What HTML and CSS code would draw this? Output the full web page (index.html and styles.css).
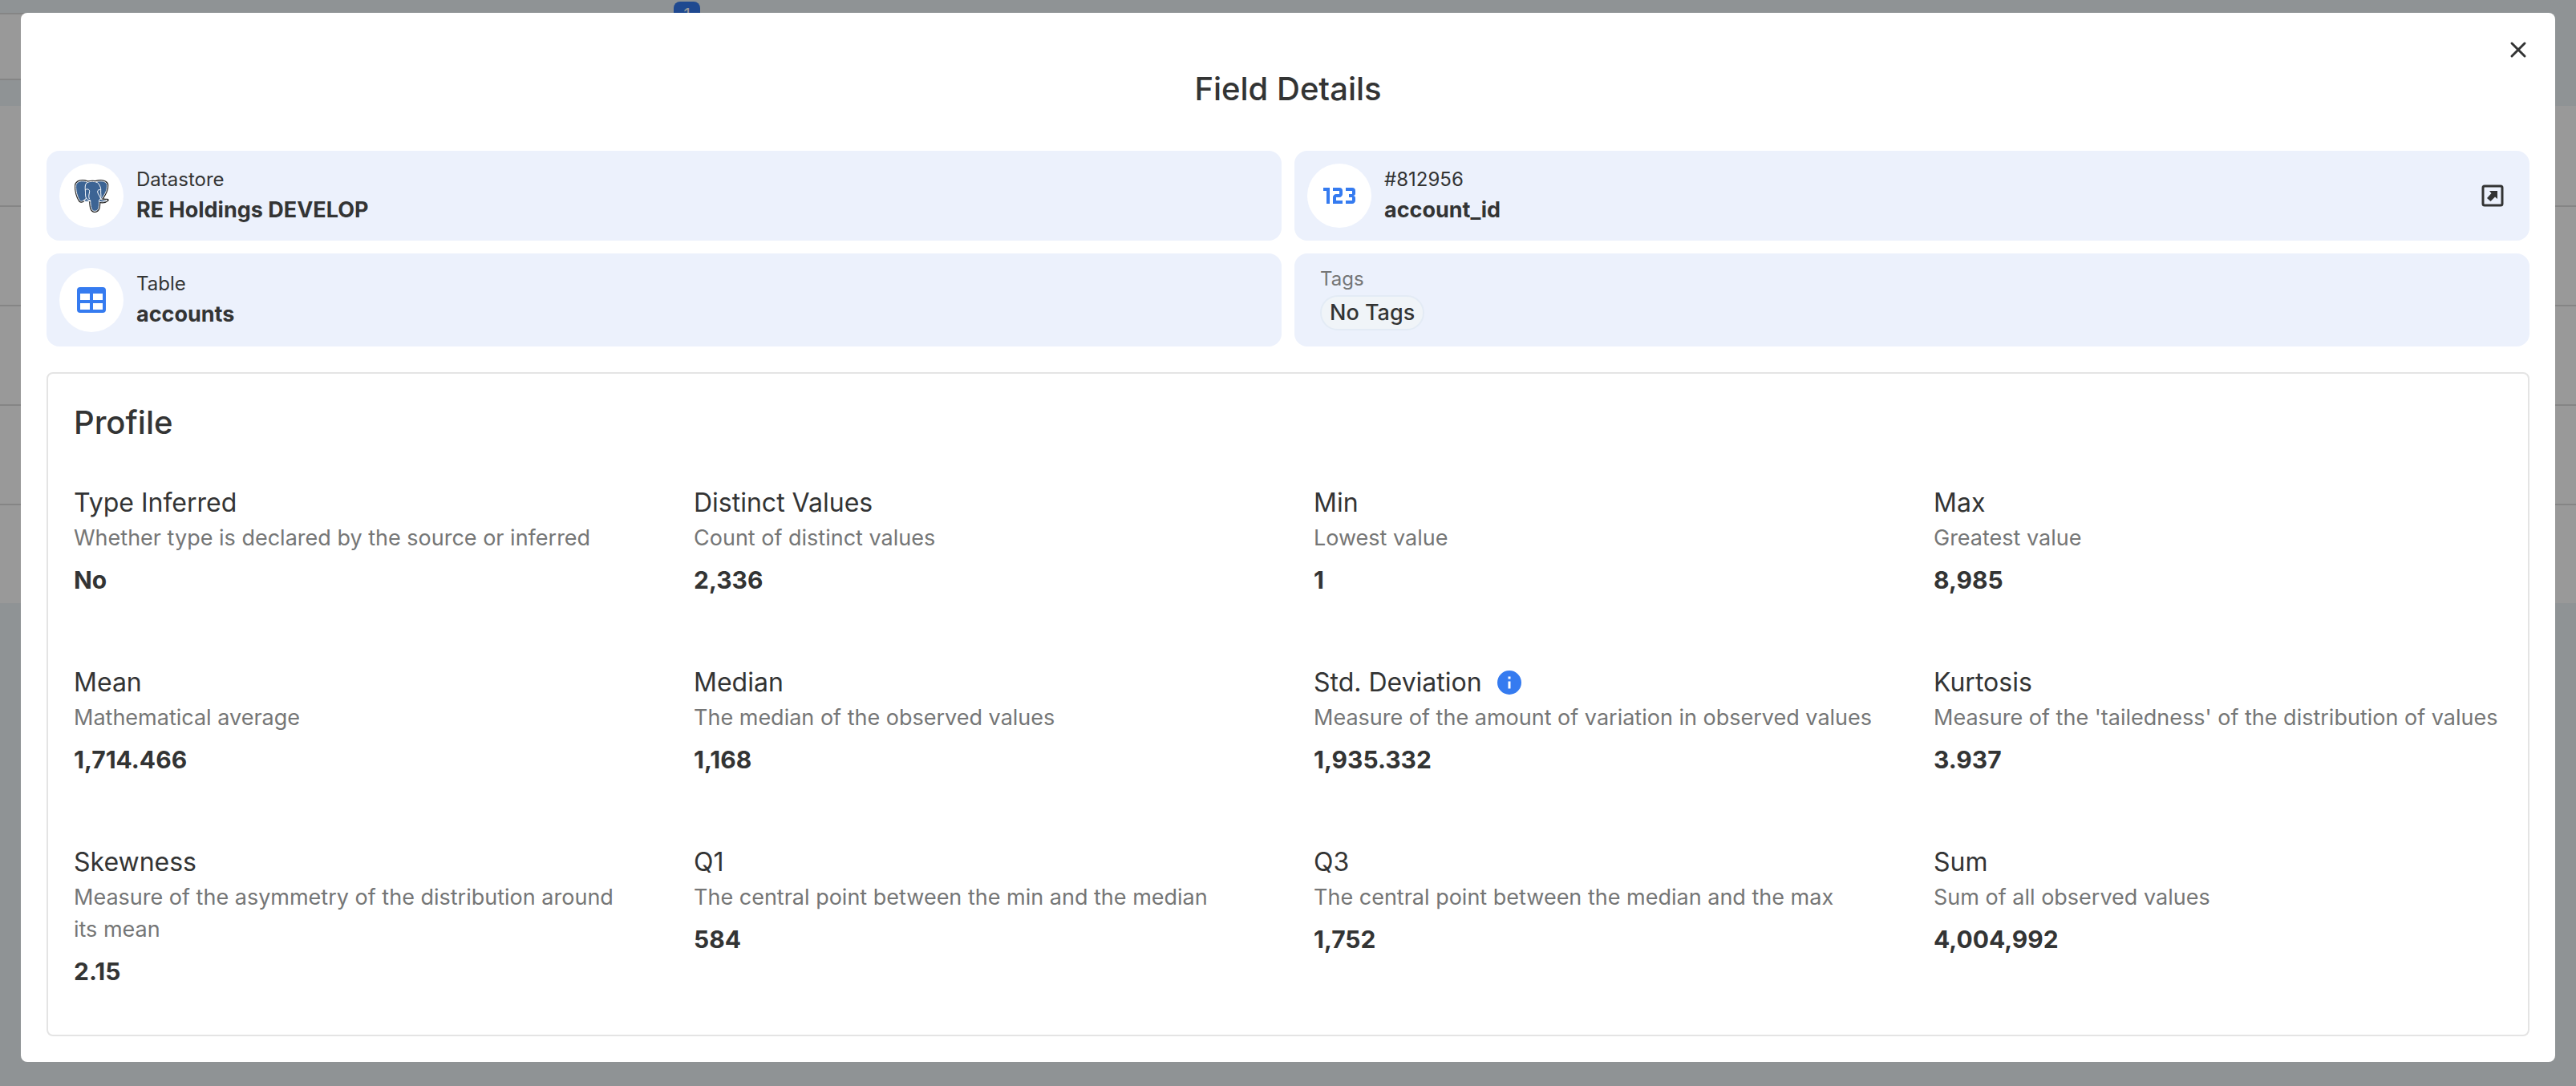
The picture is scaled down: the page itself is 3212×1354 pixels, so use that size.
FILE: index.html
```html
<!DOCTYPE html>
<html lang="en">
<head>
  <meta charset="utf-8">
  <meta name="viewport" content="width=device-width, initial-scale=1">
  <title>Field Details</title>
  <link rel="stylesheet" href="styles.css">
</head>
<body>
  <div class="app">
    <div class="page" aria-hidden="true">
      <div class="toolbar"><span class="badge">1</span></div>
      <div class="list">
        <div class="list-row"></div>
        <div class="list-row"></div>
        <div class="list-row"></div>
        <div class="list-row"></div>
        <div class="list-row"></div>
      </div>
    </div>

    <div class="overlay">
      <section class="dialog" role="dialog" aria-modal="true" aria-labelledby="dialog-title">
        <button class="icon-button close" type="button" aria-label="Close">
          <svg width="24" height="24" viewBox="0 0 24 24"><path d="M4 4 20 20M20 4 4 20" fill="none" stroke="currentColor" stroke-width="3" stroke-linecap="round"/></svg>
        </button>
        <h1 class="dialog-title" id="dialog-title">Field Details</h1>

        <div class="summary">
          <div class="card">
            <span class="avatar">
              <svg width="60" height="60" viewBox="0 0 180 180" stroke-linejoin="round">
                <g fill="#222" stroke="#222" stroke-width="10">
                  <path d="M76 39C54 31 35 36 32 50C30 70 38 98 47 109C53 115 62 108 70 99Z"/>
                  <path d="M106 38C130 31 148 38 149 50C150 68 140 86 130 100L116 104Z"/>
                  <path d="M72 42C82 35 108 35 116 44C126 60 121 84 119 106C119 126 120 147 103 148C88 148 87 130 86 108L70 104Z"/>
                  <path d="M117 99C128 107 138 107 150 106C142 114 130 115 117 111Z"/>
                </g>
                <g fill="#3c6494" stroke="#fff" stroke-width="3">
                  <path d="M76 39C54 31 35 36 32 50C30 70 38 98 47 109C53 115 62 108 72 98L90 70Z"/>
                  <path d="M106 38C130 31 148 38 149 50C150 68 140 86 128 102L100 90Z"/>
                  <path d="M117 99C128 107 138 107 150 106C142 114 130 115 117 111Z"/>
                  <path d="M72 98C67 105 64 108 60 107C70 114 78 112 88 107Z"/>
                  <path d="M72 42C82 35 108 35 116 44C123 54 126 62 125 70C124 82 128 94 124 101C121 104 119 104 119 108C119 126 120 147 103 148C88 148 87 130 86 107C80 108 72 104 69 96C67 88 68 80 67 69C66 58 66 49 72 42Z"/>
                  <path d="M67 68C74 63 83 66 83 74C82 84 78 90 82 102" fill="none"/>
                  <path d="M125 69C119 66 113 68 113 75C113 84 122 90 124 100" fill="none"/>
                </g>
              </svg>
            </span>
            <div class="card-text">
              <span class="card-label">Datastore</span>
              <span class="card-name">RE Holdings DEVELOP</span>
            </div>
          </div>

          <div class="card">
            <span class="avatar">
              <svg width="48" height="48" viewBox="0 0 24 24" fill="currentColor"><path d="M4,17V9H2V7H6V17H4M22,15C22,16.11 21.1,17 20,17H16V15H20V13H18V11H20V9H16V7H20A2,2 0 0,1 22,9V10.5A1.5,1.5 0 0,1 20.5,12A1.5,1.5 0 0,1 22,13.5V15M14,15V17H8V13C8,11.89 8.9,11 10,11H12V9H8V7H12A2,2 0 0,1 14,9V11C14,12.11 13.1,13 12,13H10V15H14Z"/></svg>
            </span>
            <div class="card-text">
              <span class="card-label">#812956</span>
              <span class="card-name">account_id</span>
            </div>
            <button class="icon-button" type="button" aria-label="Open field">
              <svg width="28" height="28" viewBox="0 0 28 28"><rect x="2" y="2" width="24" height="24" rx="2" fill="none" stroke="currentColor" stroke-width="3"/><path d="M10 8H20V18L17 15.500 11.500 21 7 17 12.500 11Z" fill="currentColor"/></svg>
            </button>
          </div>

          <div class="card">
            <span class="avatar">
              <svg width="48" height="48" viewBox="0 0 24 24" fill="currentColor"><path d="M5,4H19A2,2 0 0,1 21,6V18A2,2 0 0,1 19,20H5A2,2 0 0,1 3,18V6A2,2 0 0,1 5,4M5,8V12H11V8H5M13,8V12H19V8H13M5,14V18H11V14H5M13,14V18H19V14H13Z"/></svg>
            </span>
            <div class="card-text">
              <span class="card-label">Table</span>
              <span class="card-name">accounts</span>
            </div>
          </div>

          <div class="card tags">
            <span class="card-label muted">Tags</span>
            <span class="tag">No Tags</span>
          </div>
        </div>

        <section class="profile" aria-labelledby="profile-title">
          <h2 class="profile-title" id="profile-title">Profile</h2>
          <dl class="metrics">
            <div class="metric">
              <dt class="metric-name">Type Inferred</dt>
              <dd class="metric-help">Whether type is declared by the source or inferred</dd>
              <dd class="metric-value">No</dd>
            </div>
            <div class="metric">
              <dt class="metric-name">Distinct Values</dt>
              <dd class="metric-help">Count of distinct values</dd>
              <dd class="metric-value">2,336</dd>
            </div>
            <div class="metric">
              <dt class="metric-name">Min</dt>
              <dd class="metric-help">Lowest value</dd>
              <dd class="metric-value">1</dd>
            </div>
            <div class="metric">
              <dt class="metric-name">Max</dt>
              <dd class="metric-help">Greatest value</dd>
              <dd class="metric-value">8,985</dd>
            </div>
            <div class="metric">
              <dt class="metric-name">Mean</dt>
              <dd class="metric-help">Mathematical average</dd>
              <dd class="metric-value">1,714.466</dd>
            </div>
            <div class="metric">
              <dt class="metric-name">Median</dt>
              <dd class="metric-help">The median of the observed values</dd>
              <dd class="metric-value">1,168</dd>
            </div>
            <div class="metric">
              <dt class="metric-name">Std. Deviation
                <svg class="info" width="36" height="36" viewBox="0 0 24 24" fill="currentColor"><path d="M13,9H11V7H13M13,17H11V11H13M12,2A10,10 0 0,0 2,12A10,10 0 0,0 12,22A10,10 0 0,0 22,12A10,10 0 0,0 12,2Z"/></svg>
              </dt>
              <dd class="metric-help">Measure of the amount of variation in observed values</dd>
              <dd class="metric-value">1,935.332</dd>
            </div>
            <div class="metric">
              <dt class="metric-name">Kurtosis</dt>
              <dd class="metric-help">Measure of the 'tailedness' of the distribution of values</dd>
              <dd class="metric-value">3.937</dd>
            </div>
            <div class="metric">
              <dt class="metric-name">Skewness</dt>
              <dd class="metric-help">Measure of the asymmetry of the distribution around its mean</dd>
              <dd class="metric-value">2.15</dd>
            </div>
            <div class="metric">
              <dt class="metric-name">Q1</dt>
              <dd class="metric-help">The central point between the min and the median</dd>
              <dd class="metric-value">584</dd>
            </div>
            <div class="metric">
              <dt class="metric-name">Q3</dt>
              <dd class="metric-help">The central point between the median and the max</dd>
              <dd class="metric-value">1,752</dd>
            </div>
            <div class="metric">
              <dt class="metric-name">Sum</dt>
              <dd class="metric-help">Sum of all observed values</dd>
              <dd class="metric-value">4,004,992</dd>
            </div>
          </dl>
        </section>
      </section>
    </div>
  </div>
</body>
</html>
```
FILE: styles.css
```css
:root {
  --ink: #333434;
  --muted: #757676;
  --brand: #357bf0;
  --tint: #ecf1fc;
}

* {
  box-sizing: border-box;
}

body {
  margin: 0;
  background: #eef5f8;
  color: var(--ink);
  font-family: Inter, "Liberation Sans", sans-serif;
}

h1, h2, dl, dd {
  margin: 0;
}

svg {
  display: block;
}

/* The page and the overlay share one grid cell */
.app {
  display: grid;
  min-height: 100vh;
}

.page,
.overlay {
  grid-area: 1 / 1;
  min-width: 0;
}

.page {
  display: flex;
  flex-direction: column;
  gap: 32px;
  padding-top: 16px;
}

.toolbar {
  position: relative;
  width: 50%;
  height: 84px;
  background: #fff;
  border: solid #dedede;
  border-width: 2px 0;
}

.badge {
  position: absolute;
  top: -16px;
  left: 840px;
  width: 33px;
  height: 32px;
  border-radius: 8px;
  background: var(--brand);
  color: #fff;
  font-size: 20px;
  line-height: 32px;
  text-align: center;
}

.list {
  background: #fff;
}

.list-row {
  height: 124px;
}

.list-row + .list-row {
  border-top: 2px solid #dedede;
}

.overlay {
  padding: 16px 26px 30px;
  background: rgba(0, 0, 0, 0.4);
  z-index: 1;
}

.dialog {
  position: relative;
  padding: 71px 32px 32px;
  border-radius: 8px;
  background: #fff;
}

.dialog-title {
  margin-bottom: 53px;
  font-size: 40px;
  font-weight: 500;
  line-height: 48px;
  text-align: center;
}

.icon-button {
  display: grid;
  place-items: center;
  width: 60px;
  height: 60px;
  padding: 0;
  border: 0;
  border-radius: 50%;
  background: none;
  color: var(--ink);
  cursor: pointer;
}

.close {
  position: absolute;
  top: 16px;
  right: 16px;
}

.summary {
  display: grid;
  grid-template-columns: 1fr 1fr;
  gap: 16px;
}

.card {
  display: flex;
  align-items: center;
  gap: 16px;
  padding: 16px;
  border-radius: 16px;
  background: var(--tint);
}

.avatar {
  display: grid;
  place-items: center;
  flex: none;
  width: 80px;
  height: 80px;
  border-radius: 50%;
  background: #fff;
  color: var(--brand);
}

.card-text {
  display: flex;
  flex-direction: column;
  flex: 1;
}

.card-label {
  font-size: 24px;
  line-height: 36px;
}

.card-name {
  font-size: 27px;
  font-weight: 700;
  line-height: 40px;
}

.tags {
  flex-direction: column;
  align-items: flex-start;
  gap: 2px;
  padding: 14px 32px 20px;
}

.muted {
  color: var(--muted);
}

.tag {
  padding: 0 10px;
  border: 2px solid #e3ebf5;
  border-radius: 22px;
  background: #f0f4f8;
  font-size: 27px;
  font-weight: 500;
  line-height: 40px;
}

.profile {
  margin-top: 32px;
  padding: 37px 32px 55px;
  border: 2px solid #e4e4e4;
  border-radius: 8px;
}

.profile-title {
  margin-bottom: 52px;
  font-size: 40px;
  font-weight: 500;
  line-height: 48px;
}

.metrics {
  display: grid;
  grid-template-columns: repeat(4, 1fr);
  gap: 80px 64px;
}

.metric-name {
  display: flex;
  align-items: center;
  gap: 16px;
  font-size: 32px;
  line-height: 48px;
}

.info {
  color: var(--brand);
}

.metric-help {
  color: var(--muted);
  font-size: 27px;
  line-height: 40px;
}

.metric-value {
  margin-top: 8px;
  font-size: 30px;
  font-weight: 700;
  line-height: 48px;
}
```
